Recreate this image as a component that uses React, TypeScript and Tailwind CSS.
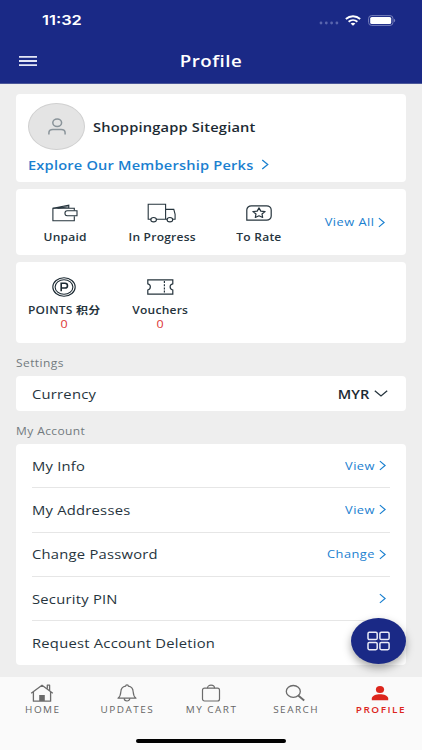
import type { ReactNode } from 'react'

interface WideProps {
  children: ReactNode
  className?: string
}

// Horizontally extended label, keeps its own box and grows from the chosen origin
const Wide = ({ children, className = '' }: WideProps) => (
  <span className={`inline-block whitespace-nowrap scale-x-[1.2] ${className}`}>{children}</span>
)

const ChevronRight = ({ className = '' }: { className?: string }) => (
  <svg viewBox="0 0 8 12" className={className} fill="none" stroke="#1a80d0" strokeWidth="1.4">
    <path d="M1 1l6 5-6 5" />
  </svg>
)

const StatusBar = () => (
  <div className="flex h-10 items-center justify-between pl-[42px] pr-[26px]">
    <Wide className="origin-left pt-px font-['Inter'] text-[13.7px] font-semibold leading-none text-white">
      11:32
    </Wide>
    <div className="flex items-center text-white">
      <svg viewBox="0 0 20 4" className="mt-[6px] h-1 w-5" fill="#5a66ae">
        <circle cx="2" cy="2" r="1.4" />
        <circle cx="7.3" cy="2" r="1.4" />
        <circle cx="12.6" cy="2" r="1.4" />
        <circle cx="17.9" cy="2" r="1.4" />
      </svg>
      <svg viewBox="0 0 18 12" className="ml-[5px] h-[11px] w-[18px]" fill="none" stroke="currentColor" strokeWidth="2">
        <path d="M1.2 4.4c4.4-4 11.2-4 15.6 0" />
        <path d="M4.2 7.4c2.8-2.4 6.8-2.4 9.6 0" />
        <path d="M6.4 9.3c1.6-1.2 3.6-1.2 5.2 0L9 11.7z" fill="currentColor" stroke="none" />
      </svg>
      <svg viewBox="0 0 28 11" className="ml-[6px] h-[11px] w-7">
        <rect x=".6" y=".6" width="24.4" height="9.8" rx="3" fill="none" stroke="#7881bc" strokeWidth="1" />
        <rect x="2.2" y="2" width="21" height="7" rx="1.6" fill="#fff" />
        <path d="M26 3.8c1.6.4 1.6 3 0 3.4z" fill="#7881bc" />
      </svg>
    </div>
  </div>
)

const Header = () => (
  <header className="h-[84px] shrink-0 border-b border-[#4b5799] bg-[#1a2986] text-white">
    <StatusBar />
    <div className="grid h-[42px] grid-cols-[60px_1fr_60px] items-center">
      <svg viewBox="0 0 18 12" className="ml-[19px] h-3 w-[18px]" stroke="#e3e6f6" strokeWidth="1.8">
        <path d="M0 1.9h18M0 6h18M0 10.1h18" />
      </svg>
      <h1 className="pt-[2px] text-center text-[15.6px] font-semibold leading-none tracking-[0.4px]">
        <Wide>Profile</Wide>
      </h1>
    </div>
  </header>
)

const WalletIcon = () => (
  <svg viewBox="0 0 26 18" className="h-[18px] w-[26px]" fill="none" stroke="#26343d" strokeWidth="1.1">
    <path d="M22.3 6.6V4.2H.9v12.6h21.4v-4.6" />
    <path d="M1 4.2l15.8-3.1v3M5.5 4.2l11.3-1.4" />
    <path d="M25 6.8H15.2c-3 0-3 4.9 0 4.9H25z" />
  </svg>
)

const TruckIcon = () => (
  <svg viewBox="0 0 30 20" className="h-5 w-[30px]" fill="none" stroke="#26343d" strokeWidth="1.1">
    <path d="M4.2 16.2H1.2V1.2h17.4v15M18.6 6.4h8.2l1.3 5v4.8h-2.5M9 16.2h11.2" />
    <ellipse cx="6.6" cy="16.7" rx="2.8" ry="2.2" />
    <ellipse cx="22.9" cy="16.7" rx="2.8" ry="2.2" />
  </svg>
)

const RateIcon = () => (
  <svg viewBox="0 0 26 16" className="h-4 w-[26px]" fill="none" stroke="#26343d" strokeWidth="1.2">
    <path d="M.8 15.2V5C.8 2.6 2.8.8 5.4.8h15.2c2.6 0 4.6 1.8 4.6 4.2v6c0 2.4-2 4.2-4.6 4.2z" />
    <path d="M13 2.9l1.8 3.2 4.3.5-3.1 2.3.7 3.6L13 10.8l-3.7 1.7.7-3.6-3.1-2.3 4.3-.5z" strokeLinejoin="round" />
  </svg>
)

const PointsIcon = () => (
  <svg viewBox="0 0 24 20" className="h-5 w-6" fill="none" stroke="#1c2a33">
    <ellipse cx="12" cy="10" rx="11.2" ry="9.2" strokeWidth="1.1" />
    <ellipse cx="12" cy="10" rx="8.9" ry="7.3" strokeWidth="1.1" />
    <path d="M9.2 14.2V6.3h3.8c3.3 0 3.3 4.7 0 4.7H9.2" strokeWidth="1.6" />
  </svg>
)

const VoucherIcon = () => (
  <svg viewBox="0 0 27 16" className="h-4 w-[27px]" fill="none" stroke="#26343d" strokeWidth="1.2">
    <path d="M.8.8h25v4c-3.6.6-3.6 5.4 0 6.2v4.2H.8V11c3.4-.8 3.4-5.6 0-6.2z" />
    <path d="M17.4 2v12.6" strokeDasharray="2 1.2" />
  </svg>
)

const ProfileCard = () => (
  <section className="mt-[10px] h-[88px] rounded bg-white px-3 pt-[9px]">
    <div className="flex items-center">
      <div className="flex h-[47px] w-[57px] items-center justify-center rounded-[50%] border border-[#d0d0d0] bg-[#e4e4e4]">
        <svg viewBox="0 0 18 17" className="h-[17px] w-[18px]" fill="none" stroke="#8a949a" strokeWidth="1.5">
          <ellipse cx="9.2" cy="4.7" rx="4.4" ry="3.8" />
          <path d="M.9 16.5v-1.7c0-2 1.6-3.2 4-3.2h8.2c2.4 0 4 1.2 4 3.2v1.7" />
        </svg>
      </div>
      <Wide className="ml-2 origin-left pt-[3px] text-[12.2px] font-semibold tracking-[0.16px] text-[#1c2a33]">
        Shoppingapp Sitegiant
      </Wide>
    </div>
    <div className="mt-[5px] flex h-[19px] items-center">
      <Wide className="w-[233px] origin-left pt-[3px] text-[12.2px] font-semibold leading-none tracking-[0.16px] text-[#1a80d0]">
        Explore Our Membership Perks
      </Wide>
      <ChevronRight className="h-[11px] w-2" />
    </div>
  </section>
)

const orders = [
  { label: 'Unpaid', icon: <WalletIcon /> },
  { label: 'In Progress', icon: <TruckIcon /> },
  { label: 'To Rate', icon: <RateIcon /> },
]

const OrdersCard = () => (
  <section className="mt-[7px] grid h-[66px] grid-cols-[97px_97px_97px_1fr] rounded bg-white">
    {orders.map((o) => (
      <div key={o.label} className="flex flex-col items-center pt-3">
        <div className="flex h-6 items-center">{o.icon}</div>
        <Wide className="mt-1 pl-px text-[10px] font-semibold leading-4 tracking-[0.2px] text-[#26343d]">{o.label}</Wide>
      </div>
    ))}
    <div className="flex items-center justify-end pr-[21px]">
      <Wide className="mr-[4px] origin-right pt-px text-[10.7px] tracking-[0.4px] text-[#1a80d0]">View All</Wide>
      <ChevronRight className="h-[11px] w-[7px]" />
    </div>
  </section>
)

const rewards = [
  { label: 'POINTS 积分', icon: <PointsIcon />, value: 0 },
  { label: 'Vouchers', icon: <VoucherIcon />, value: 0 },
]

const RewardsCard = () => (
  <section className="mt-[7px] grid h-[81px] grid-cols-[96px_96px] rounded bg-white">
    {rewards.map((r) => (
      <div key={r.label} className="flex flex-col items-center pt-[13px]">
        <div className="flex h-6 items-center">{r.icon}</div>
        <Wide className="mt-[3px] text-[10px] font-semibold leading-4 tracking-[0.2px] text-[#26343d]">{r.label}</Wide>
        <Wide className="text-[10.4px] leading-[13px] text-[#dd3636]">{r.value}</Wide>
      </div>
    ))}
  </section>
)

const SectionTitle = ({ children }: { children: ReactNode }) => (
  <h2 className="flex text-[10px] leading-[14px] tracking-[0.34px] text-[#727a7e]">
    <Wide className="origin-left">{children}</Wide>
  </h2>
)

const accountRows = [
  { label: 'My Info', action: 'View' },
  { label: 'My Addresses', action: 'View' },
  { label: 'Change Password', action: 'Change' },
  { label: 'Security PIN', action: '' },
  { label: 'Request Account Deletion', action: null },
]

const AccountCard = () => (
  <section className="mt-[6px] h-[221px] rounded bg-white px-4">
    {accountRows.map((row) => (
      <div
        key={row.label}
        className="flex h-[44.25px] items-center justify-between border-b border-[#e6e6e6] last:border-b-0"
      >
        <Wide className="origin-left pt-[3px] text-[12.3px] tracking-[0.2px] text-[#26343d]">{row.label}</Wide>
        {row.action !== null && (
          <div className="flex items-center pr-1">
            <Wide className="mr-[4px] origin-right text-[10.7px] tracking-[0.4px] text-[#1a80d0]">{row.action}</Wide>
            <ChevronRight className="h-[11px] w-[7px]" />
          </div>
        )}
      </div>
    ))}
  </section>
)

const tabs = [
  {
    label: 'HOME',
    icon: (
      <svg viewBox="0 0 24 18" className="h-[18px] w-6" fill="none" stroke="#6b6b6b" strokeWidth="1.3">
        <path d="M1.2 9.2L12 1.2l10.8 8M3.4 8v9.2h17.2V8M17.3 4.6V1.2h2.3v5.2" strokeLinejoin="round" />
        <path d="M9.2 17v-6h5.6v6z" fill="#6b6b6b" stroke="none" />
      </svg>
    ),
  },
  {
    label: 'UPDATES',
    icon: (
      <svg viewBox="0 0 20 18" className="h-[18px] w-5" fill="none" stroke="#6b6b6b" strokeWidth="1.2">
        <path d="M1 14.2c2.2-1.5 2.6-2.8 2.8-6.2.2-3.5 2.5-5.5 4.8-5.8 0-1.8 2.8-1.8 2.8 0 2.3.3 4.6 2.3 4.8 5.8.2 3.4.6 4.7 2.8 6.2z" strokeLinejoin="round" />
        <path d="M7.2 14.3c0 3.6 5.6 3.6 5.6 0" />
      </svg>
    ),
  },
  {
    label: 'MY CART',
    icon: (
      <svg viewBox="0 0 20 18" className="h-[18px] w-5" fill="none" stroke="#6b6b6b" strokeWidth="1.2">
        <rect x="1.5" y="4.2" width="17" height="12.8" rx="2" />
        <path d="M6.5 4.2C6.5.2 13.5.2 13.5 4.2" />
      </svg>
    ),
  },
  {
    label: 'SEARCH',
    icon: (
      <svg viewBox="0 0 20 18" className="h-[18px] w-5" fill="none" stroke="#6b6b6b" strokeWidth="1.3">
        <ellipse cx="8.3" cy="7.4" rx="7" ry="5.9" />
        <path d="M13.2 11.6l6 5" strokeWidth="1.9" />
      </svg>
    ),
  },
  {
    label: 'PROFILE',
    active: true,
    icon: (
      <svg viewBox="0 0 18 18" className="h-[18px] w-[18px]" fill="#dc251c">
        <ellipse cx="9" cy="5.4" rx="4.1" ry="3.5" />
        <path d="M.8 16.2v-1.6c0-2.8 4.4-4.3 8.2-4.3s8.2 1.5 8.2 4.3v1.6z" />
      </svg>
    ),
  },
]

const TabBar = () => (
  <nav className="flex h-[73px] shrink-0 flex-col bg-[#fafafa]">
    <div className="grid h-[62px] grid-cols-5">
      {tabs.map((tab) => (
        <div key={tab.label} className="flex flex-col items-center pt-[7px]">
          {tab.icon}
          <span
            className={`mt-[2px] pl-[2px] text-[8.3px] leading-3 tracking-[1.25px] ${
              tab.active ? 'font-semibold text-[#dc251c]' : 'font-medium text-[#666]'
            }`}
          >
            <Wide>{tab.label}</Wide>
          </span>
        </div>
      ))}
    </div>
    <div className="mx-auto h-1 w-[150px] rounded-full bg-black" />
  </nav>
)

export default function App() {
  return (
    <div className="relative flex h-[750px] w-[422px] flex-col overflow-hidden bg-[#eee] font-['Open_Sans','Noto_Sans_CJK_SC',sans-serif]">
      <Header />
      <main className="flex-1 px-4">
        <ProfileCard />
        <OrdersCard />
        <RewardsCard />
        <div className="mt-[13px]">
          <SectionTitle>Settings</SectionTitle>
        </div>
        <section className="mt-[6px] flex h-[35px] items-center justify-between rounded bg-white pl-4 pr-[18px]">
          <Wide className="origin-left pt-[3px] text-[12.3px] tracking-[0.2px] text-[#26343d]">Currency</Wide>
          <div className="flex items-center">
            <Wide className="mr-[5px] origin-right pt-[3px] text-[12.2px] font-semibold text-[#1c2a33]">MYR</Wide>
            <svg viewBox="0 0 14 7" className="h-[7px] w-[14px]" fill="none" stroke="#26343d" strokeWidth="1.3">
              <path d="M.8.8L7 6 13.2.8" />
            </svg>
          </div>
        </section>
        <div className="mt-[13px]">
          <SectionTitle>My Account</SectionTitle>
        </div>
        <AccountCard />
      </main>
      <TabBar />

      {/* Floating menu button */}
      <button className="absolute left-[351px] top-[618px] flex h-[46px] w-[55px] items-center justify-center rounded-[50%] bg-[#1a2986] shadow-[0_4px_8px_rgba(0,0,0,0.35)]">
        <svg viewBox="0 0 24 20" className="h-5 w-6" fill="none" stroke="#e9ebf8" strokeWidth="1.5">
          <rect x="1" y="1.3" width="9.2" height="7.3" rx="1.4" />
          <rect x="12.9" y="1.3" width="9.2" height="7.3" rx="1.4" />
          <rect x="1" y="11.4" width="9.2" height="7.3" rx="1.4" />
          <rect x="12.9" y="11.4" width="9.2" height="7.3" rx="1.4" />
        </svg>
      </button>
    </div>
  )
}
